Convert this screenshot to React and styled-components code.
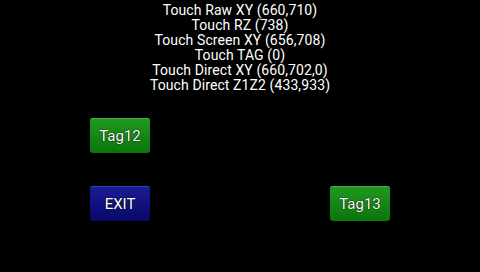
import React from "react";
import styled, { createGlobalStyle } from "styled-components";

const readings = [
  "Touch Raw XY (660,710)",
  "Touch RZ (738)",
  "Touch Screen XY (656,708)",
  "Touch TAG (0)",
  "Touch Direct XY (660,702,0)",
  "Touch Direct Z1Z2 (433,933)",
];

const App = () => {
  return (
    <Screen>
      <Global />
      <Readout>
        {readings.map((line) => (
          <Line key={line}>{line}</Line>
        ))}
      </Readout>
      <Buttons>
        <Button $tone="green" $col={1} $row={1}>Tag12</Button>
        <Button $tone="blue" $col={1} $row={2}>EXIT</Button>
        <Button $tone="green" $col={2} $row={2}>Tag13</Button>
      </Buttons>
    </Screen>
  );
};

const Global = createGlobalStyle`
  html, body {
    margin: 0;
    padding: 0;
    background: #000;
  }
`;

const Screen = styled.div`
  width: 480px;
  height: 272px;
  background: #000;
  display: flex;
  flex-direction: column;
  font-family: Roboto, "Liberation Sans", sans-serif;
  color: #fff;
  overflow: hidden;
`;

const Readout = styled.div`
  display: flex;
  flex-direction: column;
  align-items: center;
  padding-top: 3px;
`;

const Line = styled.div`
  font-size: 14px;
  line-height: 15px;
  letter-spacing: 0.1px;
  white-space: nowrap;
`;

const Buttons = styled.div`
  display: grid;
  grid-template-columns: 60px 60px;
  grid-template-rows: 35px 35px;
  column-gap: 180px;
  row-gap: 33px;
  padding-left: 90px;
  margin-top: 25px;
`;

const tones = {
  green: {
    top: "#1f9a1f",
    bottom: "#0b760b",
    edge: "#40b040",
  },
  blue: {
    top: "#1c1c96",
    bottom: "#08086a",
    edge: "#4040b0",
  },
};

const Button = styled.div`
  grid-column: ${(p) => p.$col};
  grid-row: ${(p) => p.$row};
  display: flex;
  align-items: center;
  justify-content: center;
  border-radius: 3px;
  background: linear-gradient(
    ${(p) => tones[p.$tone].top},
    ${(p) => tones[p.$tone].bottom}
  );
  box-shadow: inset 0 1px 0 ${(p) => tones[p.$tone].edge};
  font-size: 15px;
  color: #fff;
  text-shadow: 0 0 1px #000, 0 0 1px #000;
`;

export default App;
